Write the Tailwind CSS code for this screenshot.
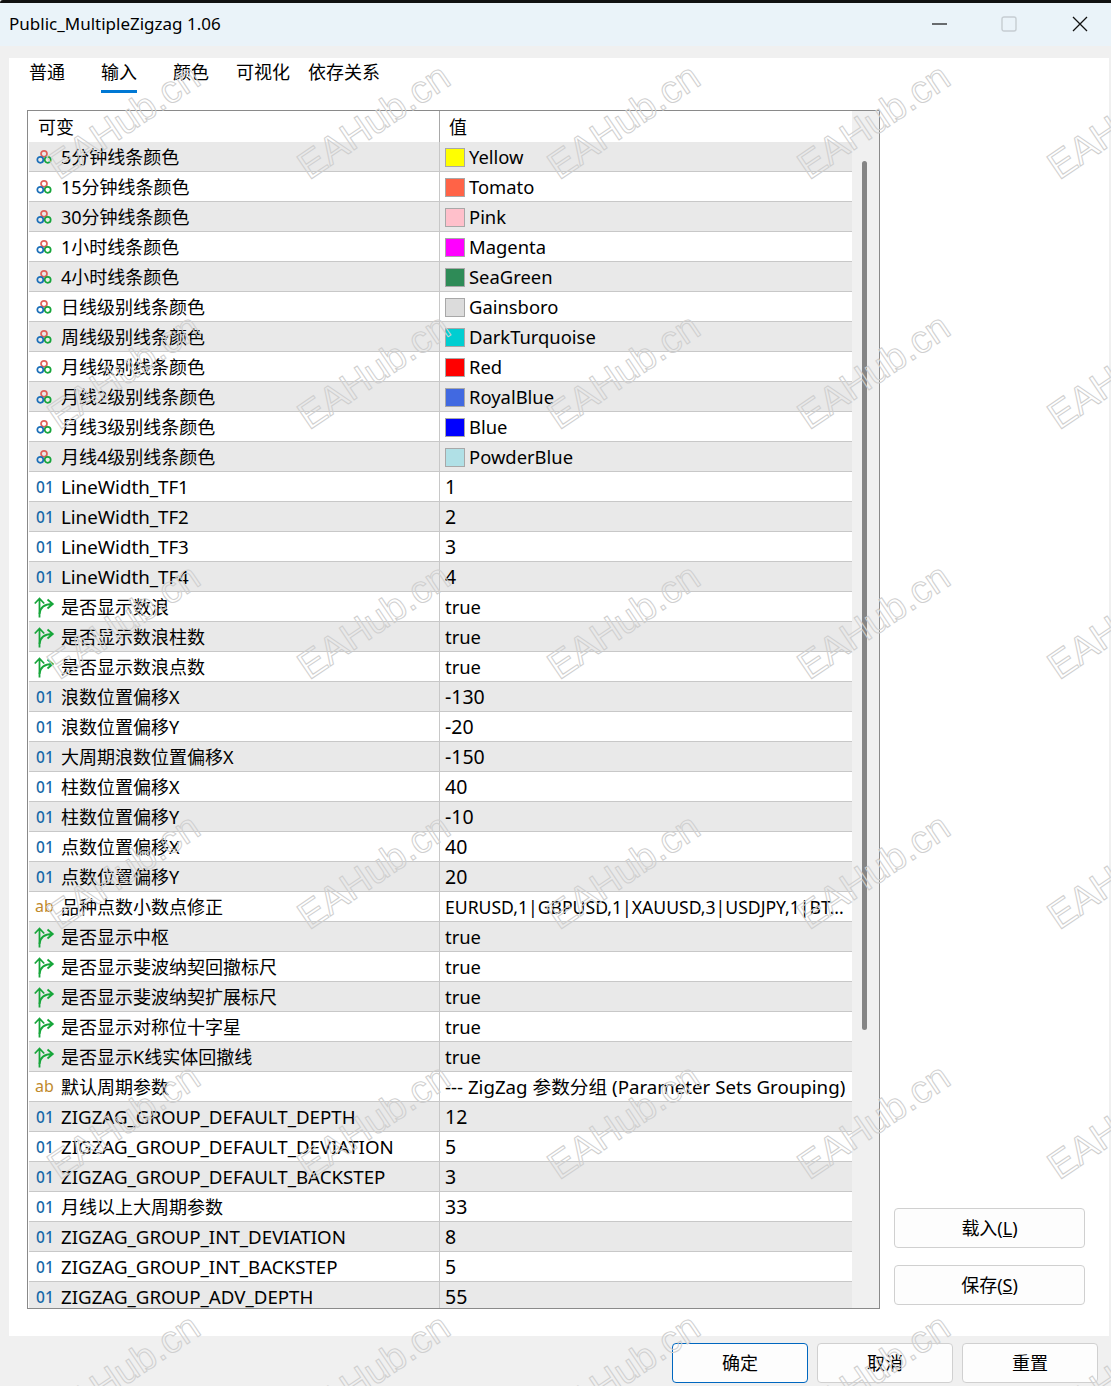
<!DOCTYPE html>
<html lang="zh"><head><meta charset="utf-8"><title>Public_MultipleZigzag 1.06</title>
<script src="https://cdn.jsdelivr.net/npm/@tailwindcss/browser@4"></script></head>
<body class="m-0">
<svg class="hidden"><defs>
<symbol id="c" viewBox="0 0 16 16"><g fill="none" stroke-width="1.700"><circle cx="8" cy="4.800" r="3" stroke="#e0605a"/><circle cx="4.300" cy="10.800" r="3" stroke="#1b6fb8"/><circle cx="11.700" cy="10.800" r="3" stroke="#18a53c"/></g></symbol>
<symbol id="a" viewBox="0 0 21 21"><g fill="none" stroke="#16a63a" stroke-width="1.800"><path d="M5.500 20.500V1.500M.8 6.500 5.500 1.500 10.200 6.500"/><path d="M5.500 17C6 10.500 11 7 18.500 7M13.500 2.500 18.800 7 13.500 11.500"/></g></symbol>
</defs></svg>
<div class="relative flex h-[1386px] w-[1111px] flex-col overflow-hidden bg-[#f0f0f0] font-['Noto_Sans','Noto_Sans_CJK_SC',sans-serif] text-[18px] text-black">
  <div class="h-[3px] shrink-0 rounded-tl-[6px] bg-[#111]"></div>
  <div class="flex h-[43px] shrink-0 items-center justify-between bg-[#eaf3f9] pb-[2px] pl-[9px]">
    <span class="text-[17px]">Public_MultipleZigzag 1.06</span>
    <div class="flex items-center">
      <svg class="mr-[54px]" width="15" height="2"><path d="M0 1h15" stroke="#111" stroke-width="1.200"/></svg>
      <svg class="mr-[55px]" width="16" height="16"><rect x="1" y="1" width="14" height="14" rx="2" fill="none" stroke="#c6cdd2" stroke-width="1.400"/></svg>
      <svg class="mr-[23px]" width="16" height="16"><path d="M1 1l14 14M15 1 1 15" stroke="#111" stroke-width="1.300"/></svg>
    </div>
  </div>
  <div class="mx-[9px] mt-[12px] flex h-[1278px] w-[1100px] shrink-0 flex-col bg-white">
    <div class="flex h-[52px] shrink-0 pl-[20px]">
      <span class="mr-[36px] h-[35px] leading-[28px]">普通</span>
      <span class="mr-[36px] h-[35px] border-b-[3px] border-[#0078d4] leading-[28px]">输入</span>
      <span class="mr-[27px] h-[35px] leading-[28px]">颜色</span>
      <span class="mr-[18px] h-[35px] leading-[28px]">可视化</span>
      <span class="h-[35px] leading-[28px]">依存关系</span>
    </div>
    <div class="flex">
      <div class="ml-[18px] flex h-[1199px] w-[853px] shrink-0 overflow-hidden border border-[#8a8a8a]">
        <div class="w-[824px] shrink-0 pl-[1px]">
          <div class="flex h-[31px] items-center leading-[33px]">
            <div class="h-full w-[411px] border-r border-[#a8a8a8] pl-[9px]">可变</div>
            <div class="h-full pl-[9px]">值</div>
          </div>
          <div class="[&>div]:flex [&>div]:h-[30px] [&>div]:border-b [&>div]:border-[#c8c8c8] [&>div:nth-child(odd)]:bg-[#e9e9e9] [&>div>p]:flex [&>div>p]:items-center [&>div>p]:whitespace-nowrap [&>div>p]:pt-[1px] [&>div>p:first-child]:w-[411px] [&>div>p:first-child]:border-r [&>div>p:first-child]:border-[#c8c8c8] [&>div>p:first-child]:pl-[7px] [&>div>p:last-child]:pl-[5px] [&>div>p:last-child]:text-[18.4px] [&_svg]:mr-[9px] [&_svg]:h-[16px] [&_svg]:w-[16px] [&_i]:mr-[4px] [&_i]:h-[19px] [&_i]:w-[20px] [&_i]:border [&_i]:border-[#a8a8a8] [&_b]:mt-[1px] [&_b]:w-[25px] [&_b]:text-[15.5px] [&_b]:font-medium [&_b]:tracking-[0.2px] [&_b]:text-[#1668a8] [&_em]:-mt-[2px] [&_em]:-ml-[1px] [&_em]:w-[26px] [&_em]:text-[16px] [&_em]:not-italic [&_em]:text-[#c08a2c]">
            <div><p><svg><use href="#c"/></svg>5分钟线条颜色</p><p><i class="bg-[#ffff00]"></i>Yellow</p></div>
            <div><p><svg><use href="#c"/></svg>15分钟线条颜色</p><p><i class="bg-[#ff6347]"></i>Tomato</p></div>
            <div><p><svg><use href="#c"/></svg>30分钟线条颜色</p><p><i class="bg-[#ffc0cb]"></i>Pink</p></div>
            <div><p><svg><use href="#c"/></svg>1小时线条颜色</p><p><i class="bg-[#ff00ff]"></i>Magenta</p></div>
            <div><p><svg><use href="#c"/></svg>4小时线条颜色</p><p><i class="bg-[#2e8b57]"></i>SeaGreen</p></div>
            <div><p><svg><use href="#c"/></svg>日线级别线条颜色</p><p><i class="bg-[#dcdcdc]"></i>Gainsboro</p></div>
            <div><p><svg><use href="#c"/></svg>周线级别线条颜色</p><p><i class="bg-[#00ced1]"></i>DarkTurquoise</p></div>
            <div><p><svg><use href="#c"/></svg>月线级别线条颜色</p><p><i class="bg-[#ff0000]"></i>Red</p></div>
            <div><p><svg><use href="#c"/></svg>月线2级别线条颜色</p><p><i class="bg-[#4169e1]"></i>RoyalBlue</p></div>
            <div><p><svg><use href="#c"/></svg>月线3级别线条颜色</p><p><i class="bg-[#0000ff]"></i>Blue</p></div>
            <div><p><svg><use href="#c"/></svg>月线4级别线条颜色</p><p><i class="bg-[#b0e0e6]"></i>PowderBlue</p></div>
            <div><p class="text-[18.7px]"><b>01</b>LineWidth_TF1</p><p class="!text-[19.5px]">1</p></div>
            <div><p class="text-[18.7px]"><b>01</b>LineWidth_TF2</p><p class="!text-[19.5px]">2</p></div>
            <div><p class="text-[18.7px]"><b>01</b>LineWidth_TF3</p><p class="!text-[19.5px]">3</p></div>
            <div><p class="text-[18.7px]"><b>01</b>LineWidth_TF4</p><p class="!text-[19.5px]">4</p></div>
            <div><p><svg class="!ml-[-2px] !mr-[6px] !h-[21px] !w-[21px]"><use href="#a"/></svg>是否显示数浪</p><p>true</p></div>
            <div><p><svg class="!ml-[-2px] !mr-[6px] !h-[21px] !w-[21px]"><use href="#a"/></svg>是否显示数浪柱数</p><p>true</p></div>
            <div><p><svg class="!ml-[-2px] !mr-[6px] !h-[21px] !w-[21px]"><use href="#a"/></svg>是否显示数浪点数</p><p>true</p></div>
            <div><p><b>01</b>浪数位置偏移X</p><p class="!text-[19.5px]">-130</p></div>
            <div><p><b>01</b>浪数位置偏移Y</p><p class="!text-[19.5px]">-20</p></div>
            <div><p><b>01</b>大周期浪数位置偏移X</p><p class="!text-[19.5px]">-150</p></div>
            <div><p><b>01</b>柱数位置偏移X</p><p class="!text-[19.5px]">40</p></div>
            <div><p><b>01</b>柱数位置偏移Y</p><p class="!text-[19.5px]">-10</p></div>
            <div><p><b>01</b>点数位置偏移X</p><p class="!text-[19.5px]">40</p></div>
            <div><p><b>01</b>点数位置偏移Y</p><p class="!text-[19.5px]">20</p></div>
            <div><p><em>ab</em>品种点数小数点修正</p><p class="!text-[17.6px]">EURUSD,1|GBPUSD,1|XAUUSD,3|USDJPY,1|BT...</p></div>
            <div><p><svg class="!ml-[-2px] !mr-[6px] !h-[21px] !w-[21px]"><use href="#a"/></svg>是否显示中枢</p><p>true</p></div>
            <div><p><svg class="!ml-[-2px] !mr-[6px] !h-[21px] !w-[21px]"><use href="#a"/></svg>是否显示斐波纳契回撤标尺</p><p>true</p></div>
            <div><p><svg class="!ml-[-2px] !mr-[6px] !h-[21px] !w-[21px]"><use href="#a"/></svg>是否显示斐波纳契扩展标尺</p><p>true</p></div>
            <div><p><svg class="!ml-[-2px] !mr-[6px] !h-[21px] !w-[21px]"><use href="#a"/></svg>是否显示对称位十字星</p><p>true</p></div>
            <div><p><svg class="!ml-[-2px] !mr-[6px] !h-[21px] !w-[21px]"><use href="#a"/></svg>是否显示K线实体回撤线</p><p>true</p></div>
            <div><p><em>ab</em>默认周期参数</p><p class="!text-[18.7px]">--- ZigZag 参数分组 (Parameter Sets Grouping)</p></div>
            <div><p class="text-[18.7px]"><b>01</b>ZIGZAG_GROUP_DEFAULT_DEPTH</p><p class="!text-[19.5px]">12</p></div>
            <div><p class="text-[18.7px]"><b>01</b>ZIGZAG_GROUP_DEFAULT_DEVIATION</p><p class="!text-[19.5px]">5</p></div>
            <div><p class="text-[18.7px]"><b>01</b>ZIGZAG_GROUP_DEFAULT_BACKSTEP</p><p class="!text-[19.5px]">3</p></div>
            <div><p><b>01</b>月线以上大周期参数</p><p class="!text-[19.5px]">33</p></div>
            <div><p class="text-[18.7px]"><b>01</b>ZIGZAG_GROUP_INT_DEVIATION</p><p class="!text-[19.5px]">8</p></div>
            <div><p class="text-[18.7px]"><b>01</b>ZIGZAG_GROUP_INT_BACKSTEP</p><p class="!text-[19.5px]">5</p></div>
            <div><p class="text-[18.7px]"><b>01</b>ZIGZAG_GROUP_ADV_DEPTH</p><p class="!text-[19.5px]">55</p></div>
          </div>
        </div>
        <div class="flex-1 bg-[#f0f0f0] pl-[10px] pt-[50px]"><div class="h-[869px] w-[5px] rounded-[3px] bg-[#858585]"></div></div>
      </div>
      <div class="ml-[14px] flex w-[191px] flex-col justify-end gap-[17px] pb-[4px]">
        <button class="h-[40px] rounded-[4px] border border-[#d0d0d0] bg-[#fdfdfd]">载入(<u>L</u>)</button>
        <button class="h-[40px] rounded-[4px] border border-[#d0d0d0] bg-[#fdfdfd]">保存(<u>S</u>)</button>
      </div>
    </div>
  </div>
  <div class="mt-[7px] flex justify-end gap-[9px] pr-[13px]">
    <button class="h-[40px] w-[136px] rounded-[4px] border border-[#0067c0] bg-[#fdfdfd]">确定</button>
    <button class="h-[40px] w-[136px] rounded-[4px] border border-[#d0d0d0] bg-[#fdfdfd]">取消</button>
    <button class="h-[40px] w-[136px] rounded-[4px] border border-[#d0d0d0] bg-[#fdfdfd]">重置</button>
  </div>
  <div class="pointer-events-none absolute left-[47px] top-[65px] grid w-[1250px] grid-cols-[repeat(5,250px)] grid-rows-[repeat(6,250px)] font-['Liberation_Sans',sans-serif] text-[38.5px] leading-none text-transparent [-webkit-text-stroke:1px_#cfcfcf] [&>span]:relative [&>span]:top-[82px] [&>span]:left-[17px] [&>span]:h-[41px] [&>span]:w-[190px] [&>span]:origin-bottom-left [&>span]:-rotate-[34deg] [&>span]:whitespace-nowrap">
    <span>EAHub.cn</span><span>EAHub.cn</span><span>EAHub.cn</span><span>EAHub.cn</span><span>EAHub.cn</span>
    <span>EAHub.cn</span><span>EAHub.cn</span><span>EAHub.cn</span><span>EAHub.cn</span><span>EAHub.cn</span>
    <span>EAHub.cn</span><span>EAHub.cn</span><span>EAHub.cn</span><span>EAHub.cn</span><span>EAHub.cn</span>
    <span>EAHub.cn</span><span>EAHub.cn</span><span>EAHub.cn</span><span>EAHub.cn</span><span>EAHub.cn</span>
    <span>EAHub.cn</span><span>EAHub.cn</span><span>EAHub.cn</span><span>EAHub.cn</span><span>EAHub.cn</span>
    <span>EAHub.cn</span><span>EAHub.cn</span><span>EAHub.cn</span><span>EAHub.cn</span><span>EAHub.cn</span>
  </div>
</div>
</body></html>
